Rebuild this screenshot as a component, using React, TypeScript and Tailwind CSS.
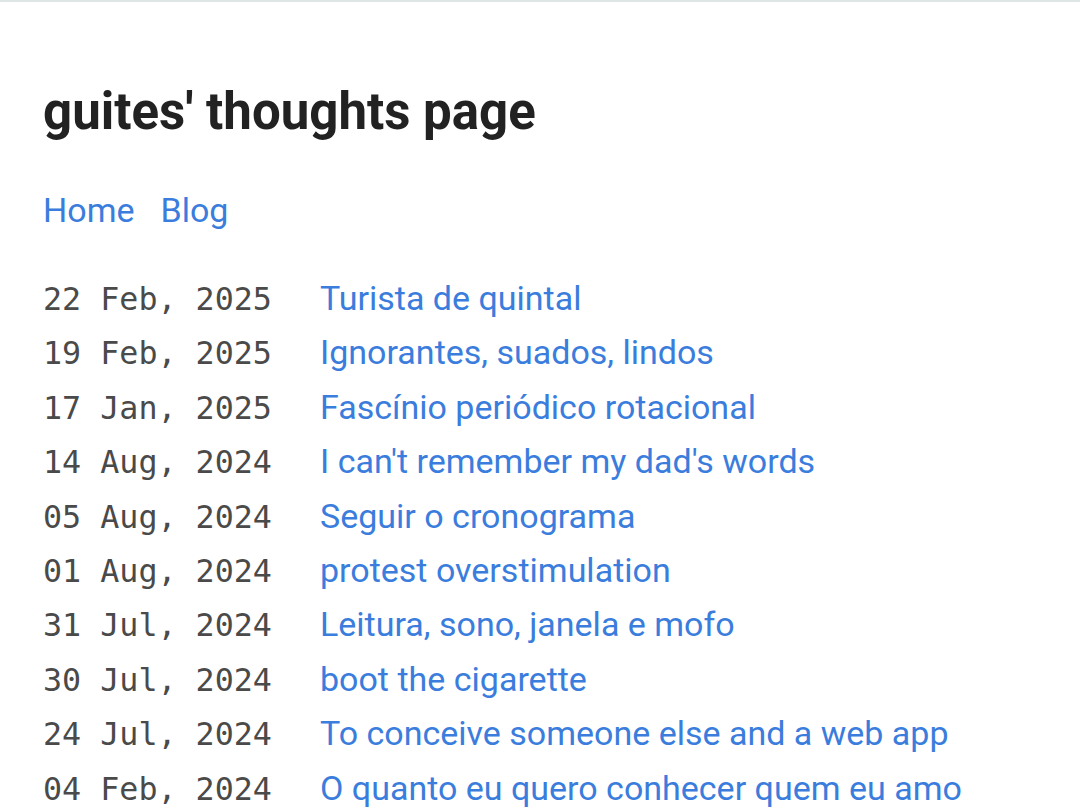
import React from 'react';

const posts = [
  { date: '22 Feb, 2025', title: 'Turista de quintal' },
  { date: '19 Feb, 2025', title: 'Ignorantes, suados, lindos' },
  { date: '17 Jan, 2025', title: 'Fascínio periódico rotacional' },
  { date: '14 Aug, 2024', title: "I can't remember my dad's words" },
  { date: '05 Aug, 2024', title: 'Seguir o cronograma' },
  { date: '01 Aug, 2024', title: 'protest overstimulation' },
  { date: '31 Jul, 2024', title: 'Leitura, sono, janela e mofo' },
  { date: '30 Jul, 2024', title: 'boot the cigarette' },
  { date: '24 Jul, 2024', title: 'To conceive someone else and a web app' },
  { date: '04 Feb, 2024', title: 'O quanto eu quero conhecer quem eu amo' },
];

const App = () => {
  return (
    <div className="min-h-screen bg-white border-t-2 border-[#dde6e4] font-['Roboto',sans-serif]">
      <main className="px-[43px] pt-[80px]">
        <h1 className="text-[51px] font-bold leading-[60px] text-[#222]">guites' thoughts page</h1>

        <nav className="mt-[48px] flex gap-[26px] text-[34px] leading-[40px] text-[#3b7ddd]">
          <a href="#">Home</a>
          <a href="#">Blog</a>
        </nav>

        <ul className="mt-[41px]">
          {posts.map((p) => (
            <li key={p.date + p.title} className="flex items-baseline h-[54.4px] leading-[54.4px]">
              <span className="w-[277px] shrink-0 font-['DejaVu_Sans_Mono',monospace] text-[31.7px] text-[#4a4a4a]">
                {p.date}
              </span>
              <a href="#" className="text-[34px] text-[#3b7ddd] whitespace-nowrap">
                {p.title}
              </a>
            </li>
          ))}
        </ul>
      </main>
    </div>
  );
};

export default App;
